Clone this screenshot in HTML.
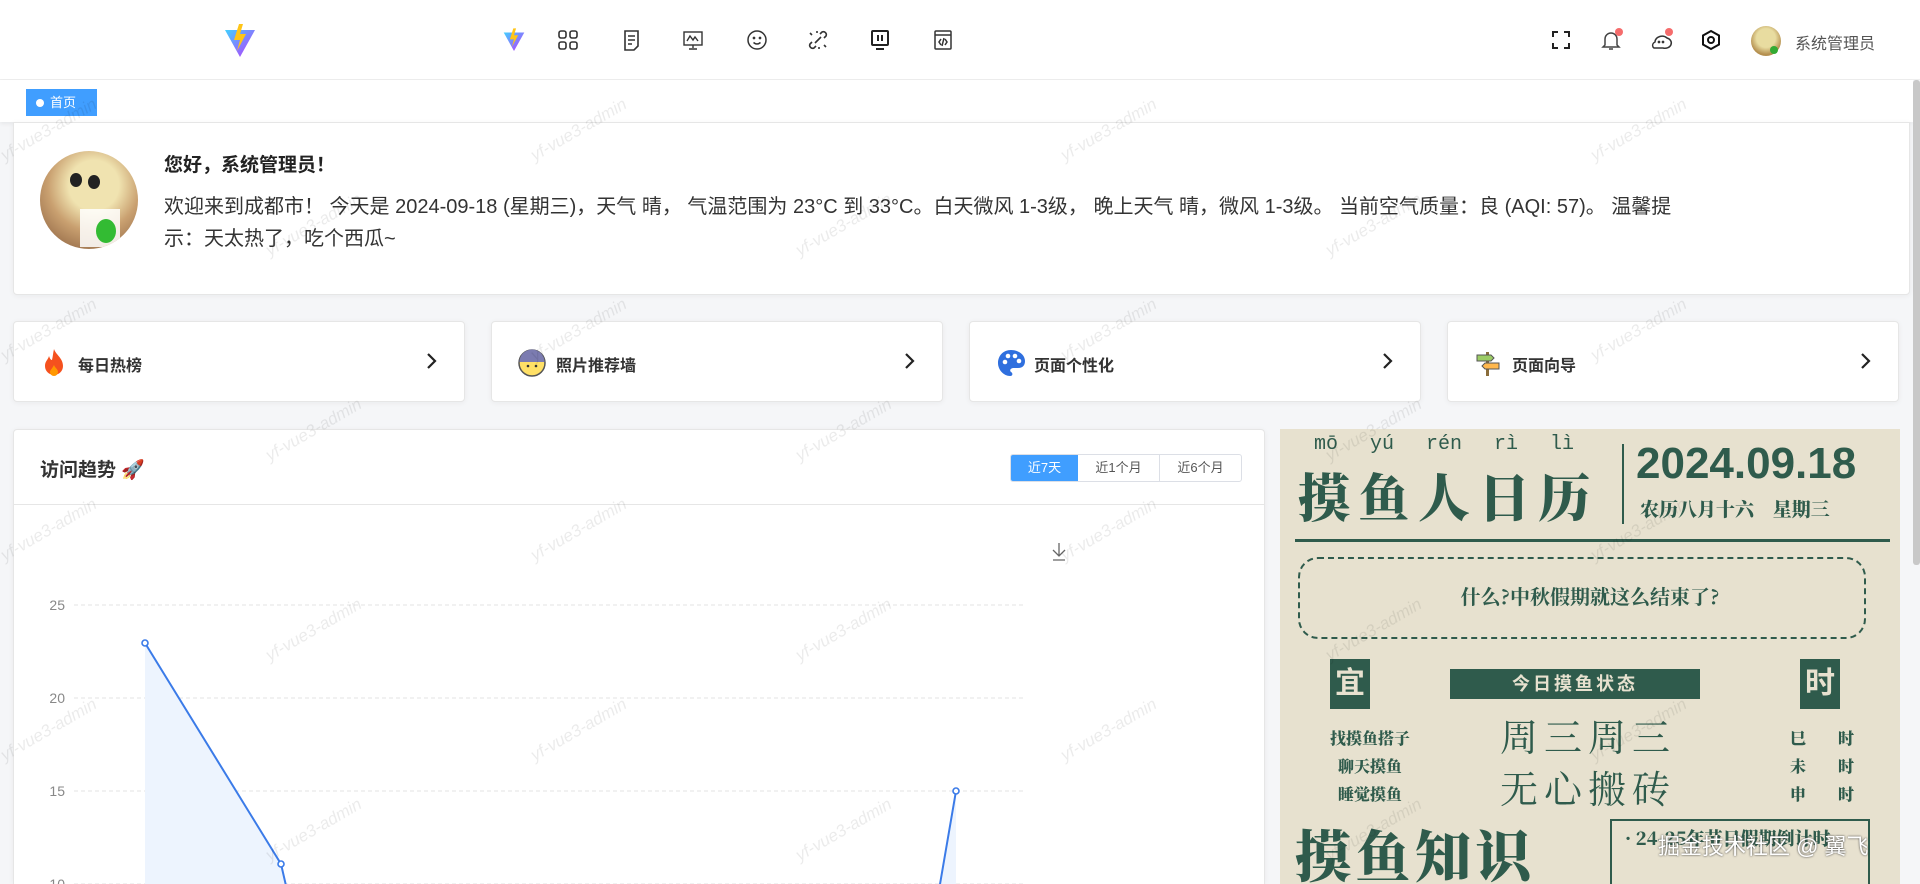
<!DOCTYPE html>
<html style="overflow:hidden;width:1920px;height:884px"><head><meta charset="utf-8">
<style>
*{box-sizing:border-box;margin:0;padding:0}
body{width:1920px;height:884px;overflow:hidden;background:#f5f6f8;font-family:"Liberation Sans","Noto Sans CJK SC",sans-serif;color:#333;position:relative}
.hdr{position:absolute;left:0;top:0;width:1920px;height:80px;background:#fff;border-bottom:1px solid #eee}
.tabs{position:absolute;left:0;top:80px;width:1913px;height:42px;background:#fff;box-shadow:0 2px 4px rgba(0,0,0,.06)}
.tag{position:absolute;left:26px;top:9px;width:71px;height:27px;background:#409eff;color:#fff;font-size:13px;line-height:27px;padding-left:10px}
.tag i{display:inline-block;width:8px;height:8px;border-radius:50%;background:#fff;margin-right:6px;vertical-align:0}
.card{position:absolute;background:#fff;border:1px solid #e6e6e6;border-radius:4px;box-shadow:0 1px 6px rgba(0,0,0,.05)}
.ic{position:absolute;top:28px;width:24px;height:24px}
.qc{top:321px;width:452px;height:81px}
.qc .t{position:absolute;left:64px;top:30px;font-size:16px;font-weight:bold;color:#333}
.qc .ar{position:absolute;right:26px;top:30px}
.wm{position:absolute;color:rgba(0,0,0,.08);font-size:17px;font-style:italic;transform:rotate(-30deg);white-space:nowrap;z-index:50;pointer-events:none}
.sb{position:absolute;right:0;top:80px;width:7px;height:485px;background:#c8c8c8;border-radius:3px}
.pg{color:#2f5b4c;font-family:"Noto Serif CJK SC","Noto Sans CJK SC",serif;font-weight:900;white-space:nowrap}
</style></head><body>
<div class="hdr">
 <svg style="position:absolute;left:224px;top:24px" width="32" height="34" viewBox="0 0 32 34"><defs><linearGradient id="v" x1="0" y1="0" x2="1" y2="1"><stop offset="0" stop-color="#41d1ff"/><stop offset="1" stop-color="#bd34fe"/></linearGradient></defs><path d="M1 6 L16 33 L31 6 Z" fill="url(#v)"/><path d="M15 0 L10 16 L16 16 L13 27 L22 10 L16 10 L19 0Z" fill="#ffc517"/></svg>
 <svg style="position:absolute;left:503px;top:28px" width="22" height="24" viewBox="0 0 32 34"><path d="M1 6 L16 33 L31 6 Z" fill="url(#v)"/><path d="M15 0 L10 16 L16 16 L13 27 L22 10 L16 10 L19 0Z" fill="#ffc517"/></svg>
 <svg class="ic" style="left:556px" viewBox="0 0 24 24" fill="none" stroke="#333" stroke-width="1.6"><rect x="3" y="3" width="7" height="7" rx="2"/><rect x="14" y="3" width="7" height="7" rx="2"/><rect x="3" y="14" width="7" height="7" rx="2"/><rect x="14" y="14" width="7" height="7" rx="2"/></svg>
 <svg class="ic" style="left:620px" viewBox="0 0 24 24" fill="none" stroke="#333" stroke-width="1.6"><path d="M5 3h13v15l-4 4H5z"/><path d="M8 8h7M8 12h7M8 16h4"/></svg>
 <svg class="ic" style="left:681px" viewBox="0 0 24 24" fill="none" stroke="#333" stroke-width="1.4"><rect x="3" y="4" width="18" height="13"/><path d="M6 13l3-5 3 4 2-3 3 4M12 17v3M8 21h8"/></svg>
 <svg class="ic" style="left:745px" viewBox="0 0 24 24" fill="none" stroke="#333" stroke-width="1.5"><circle cx="12" cy="12" r="9"/><circle cx="9" cy="10" r=".6"/><circle cx="15" cy="10" r=".6"/><path d="M8.5 14.5q3.5 3 7 0"/></svg>
 <svg class="ic" style="left:806px" viewBox="0 0 24 24" fill="none" stroke="#333" stroke-width="1.6"><path d="M14 6l2-2a3 3 0 014 4l-2 2M10 18l-2 2a3 3 0 01-4-4l2-2M9 15l6-6M4 5l2 2M18 17l2 2M11 3v2M13 19v2"/></svg>
 <svg class="ic" style="left:868px" viewBox="0 0 24 24" fill="none" stroke="#222" stroke-width="2"><rect x="4" y="3" width="16" height="14" rx="1"/><path d="M10 7v6M14 7v6M8 21h8"/></svg>
 <svg class="ic" style="left:931px" viewBox="0 0 24 24" fill="none" stroke="#333" stroke-width="1.5"><rect x="4" y="3" width="16" height="18" rx="1"/><path d="M4 7h16M10 11l-2 3 2 3M14 11l2 3-2 3M13 10l-2 8"/></svg>
 <svg class="ic" style="left:1549px" viewBox="0 0 24 24" fill="none" stroke="#222" stroke-width="2"><path d="M4 9V4h5M15 4h5v5M20 15v5h-5M9 20H4v-5"/></svg>
 <svg class="ic" style="left:1599px" viewBox="0 0 24 24" fill="none" stroke="#444" stroke-width="1.5"><path d="M6 17V11a6 6 0 0112 0v6l2 2H4z M10 21h4"/></svg>
 <div style="position:absolute;left:1615px;top:28px;width:8px;height:8px;border-radius:50%;background:#f56c6c"></div>
 <svg class="ic" style="left:1649px" viewBox="0 0 24 24" fill="none" stroke="#333" stroke-width="1.5"><path d="M4 19c-1-2 0-4 2-5a7 6 0 0112-4 6 5 0 01-4 10H5z"/><circle cx="10" cy="14" r=".6"/><circle cx="14" cy="14" r=".6"/></svg>
 <div style="position:absolute;left:1665px;top:28px;width:8px;height:8px;border-radius:50%;background:#f56c6c"></div>
 <svg class="ic" style="left:1699px" viewBox="0 0 24 24" fill="none" stroke="#111" stroke-width="2"><path d="M12 3l8 4.5v9L12 21l-8-4.5v-9z"/><circle cx="12" cy="12" r="3"/></svg>
 <div style="position:absolute;left:1751px;top:26px;width:30px;height:30px;border-radius:50%;background:radial-gradient(circle at 50% 40%,#e8dca0 40%,#b59050 70%)"><div style="position:absolute;right:3px;bottom:2px;width:8px;height:8px;border-radius:50%;background:#3a3"></div></div>
 <div style="position:absolute;left:1795px;top:30px;font-size:16px;color:#555">系统管理员</div>
</div>
<div class="tabs"><div class="tag"><i></i>首页</div></div>
<div class="sb"></div>

<div class="card" style="left:13px;top:122px;width:1897px;height:173px;border-radius:0 0 4px 4px">
 <div style="position:absolute;left:26px;top:28px;width:98px;height:98px;border-radius:50%;background:radial-gradient(circle at 55% 35%,#f0e3b0 30%,#c9a070 55%,#a07650 80%);overflow:hidden"><div style="position:absolute;left:30px;top:22px;width:12px;height:14px;background:#222;border-radius:50%"></div><div style="position:absolute;left:48px;top:24px;width:12px;height:14px;background:#222;border-radius:50%"></div><div style="position:absolute;left:40px;top:58px;width:40px;height:38px;background:#fff;opacity:.85"></div><div style="position:absolute;left:56px;top:68px;width:20px;height:24px;border-radius:50%;background:#3b3"></div></div>
 <div style="position:absolute;left:150px;top:27px;font-size:19px;font-weight:bold;color:#222">您好，系统管理员！</div>
 <div style="position:absolute;left:150px;top:68px;width:1525px;font-size:20px;line-height:32px;color:#333">欢迎来到成都市！ 今天是 2024-09-18 (星期三)，天气 晴， 气温范围为 23°C 到 33°C。白天微风 1-3级， 晚上天气 晴，微风 1-3级。 当前空气质量：良 (AQI: 57)。 温馨提示：天太热了，吃个西瓜~</div>
</div>

<div class="card qc" style="left:13px">
 <svg style="position:absolute;left:28px;top:26px" width="24" height="30" viewBox="0 0 24 30"><path d="M12 1c2 6 9 9 9 17a9 9 0 01-18 0c0-5 3-6 4-10 1 3 2 4 3 4 1-4 1-7 2-11z" fill="#f5511e"/><path d="M12 17c1 3 4 4 4 7a4 4 0 01-8 0c0-2 2-3 4-7z" fill="#ff9800"/></svg>
 <div class="t">每日热榜</div>
 <svg class="ar" width="14" height="18" viewBox="0 0 14 18" fill="none" stroke="#222" stroke-width="2.2"><path d="M4 2l7 7-7 7"/></svg>
</div>
<div class="card qc" style="left:491px">
 <svg style="position:absolute;left:26px;top:27px" width="28" height="28" viewBox="0 0 28 28"><circle cx="14" cy="14" r="13" fill="#ffe066" stroke="#555" stroke-width="1.5"/><path d="M1.5 13a12.5 12.5 0 0125 0z" fill="#7b7bb0"/><circle cx="10" cy="17" r="1.3" fill="#333"/><circle cx="18" cy="17" r="1.3" fill="#333"/></svg>
 <div class="t">照片推荐墙</div>
 <svg class="ar" width="14" height="18" viewBox="0 0 14 18" fill="none" stroke="#222" stroke-width="2.2"><path d="M4 2l7 7-7 7"/></svg>
</div>
<div class="card qc" style="left:969px">
 <svg style="position:absolute;left:26px;top:26px" width="30" height="30" viewBox="0 0 30 30"><path d="M15 2C7 2 2 8 2 15s6 13 12 13c3 0 3-3 1-4-2-2 0-4 3-4h4c5 0 7-3 7-7C29 7 23 2 15 2z" fill="#2f6fde"/><circle cx="9" cy="14" r="2.3" fill="#fff"/><circle cx="12" cy="8" r="2.3" fill="#fff"/><circle cx="19" cy="8" r="2.3" fill="#fff"/><circle cx="23" cy="13" r="2.3" fill="#fff"/></svg>
 <div class="t">页面个性化</div>
 <svg class="ar" width="14" height="18" viewBox="0 0 14 18" fill="none" stroke="#222" stroke-width="2.2"><path d="M4 2l7 7-7 7"/></svg>
</div>
<div class="card qc" style="left:1447px">
 <svg style="position:absolute;left:26px;top:27px" width="28" height="28" viewBox="0 0 28 28"><rect x="12" y="3" width="3" height="24" fill="#8a6d3b"/><path d="M3 6h14l3 3-3 3H3z" fill="#9ccc65" stroke="#555"/><path d="M25 14H11l-3 3 3 3h14z" fill="#ffb74d" stroke="#555"/></svg>
 <div class="t">页面向导</div>
 <svg class="ar" width="14" height="18" viewBox="0 0 14 18" fill="none" stroke="#222" stroke-width="2.2"><path d="M4 2l7 7-7 7"/></svg>
</div>

<div class="card" style="left:13px;top:429px;width:1252px;height:455px;border-radius:4px 4px 0 0;border-bottom:none;overflow:hidden">
 <div style="position:absolute;left:0;top:0;width:100%;height:75px;border-bottom:1px solid #e6e6e6"></div>
 <div style="position:absolute;left:26px;top:25px;font-size:19px;font-weight:bold;color:#333">访问趋势 🚀</div>
 <div style="position:absolute;left:996px;top:24px;height:28px;display:flex;font-size:13px;line-height:26px;border:1px solid #dcdfe6;border-radius:3px;overflow:hidden">
  <div style="width:67px;text-align:center;background:#409eff;color:#fff">近7天</div>
  <div style="width:82px;text-align:center;color:#555;border-right:1px solid #dcdfe6">近1个月</div>
  <div style="width:81px;text-align:center;color:#555">近6个月</div>
 </div>
 <svg style="position:absolute;left:0;top:0" width="1252" height="470">
  <path d="M1045 113v13M1039 120l6 6 6-6M1039 130h12" stroke="#666" stroke-width="1.3" fill="none"/>
  <g stroke="#e3e3e3" stroke-dasharray="4 3"><path d="M60 175H1010M60 268H1010M60 361H1010M60 454H1010"/></g>
  <g font-size="14" fill="#888" text-anchor="end" font-family="Liberation Sans"><text x="51" y="180">25</text><text x="51" y="273">20</text><text x="51" y="366">15</text><text x="51" y="459">10</text></g>
  <path d="M131 213L267 434L273 460L131 460Z" fill="#edf4fe"/>
  <path d="M925 460L942 361L942 460Z" fill="#edf4fe"/>
  <path d="M131 213L267 434L273 460M925 460L942 361" stroke="#3b7be8" stroke-width="2" fill="none"/>
  <circle cx="131" cy="213" r="3" fill="#fff" stroke="#3b7be8" stroke-width="1.6"/>
  <circle cx="267" cy="434" r="3" fill="#fff" stroke="#3b7be8" stroke-width="1.6"/>
  <circle cx="942" cy="361" r="3" fill="#fff" stroke="#3b7be8" stroke-width="1.6"/>
 </svg>
</div>

<div style="position:absolute;left:1280px;top:429px;width:620px;height:455px;background:#e7e1cf;overflow:hidden">
 <div class="pg" style="position:absolute;left:34px;top:4px;font-size:20px;font-weight:400;font-family:'Liberation Mono',monospace;word-spacing:20px">mō yú rén rì lì</div>
 <div class="pg" style="position:absolute;left:18px;top:28px;font-size:52px;letter-spacing:8px">摸鱼人日历</div>
 <div style="position:absolute;left:342px;top:15px;width:2px;height:80px;background:#2f5b4c"></div>
 <div class="pg" style="position:absolute;left:356px;top:10px;font-size:44px;font-family:'Liberation Sans';font-weight:bold">2024.09.18</div>
 <div class="pg" style="position:absolute;left:360px;top:66px;font-size:19px">农历八月十六 &nbsp;&nbsp; 星期三</div>
 <div style="position:absolute;left:15px;top:110px;width:595px;height:3px;background:#2f5b4c"></div>
 <div style="position:absolute;left:18px;top:128px;width:568px;height:82px;border:2px dashed #2f5b4c;border-radius:20px"></div>
 <div class="pg" style="position:absolute;left:0;top:152px;width:620px;text-align:center;font-size:20px;font-weight:700">什么?中秋假期就这么结束了?</div>
 <div style="position:absolute;left:50px;top:230px;width:40px;height:50px;background:#2f5b4c;color:#e7e1cf;font-size:30px;text-align:center;line-height:50px;font-weight:bold">宜</div>
 <div style="position:absolute;left:520px;top:230px;width:40px;height:50px;background:#2f5b4c;color:#e7e1cf;font-size:30px;text-align:center;line-height:50px;font-weight:bold">时</div>
 <div style="position:absolute;left:170px;top:240px;width:250px;height:30px;background:#2f5b4c;color:#e7e1cf;font-size:18px;text-align:center;line-height:30px;font-weight:bold;letter-spacing:3px">今日摸鱼状态</div>
 <div class="pg" style="position:absolute;left:30px;top:295px;font-size:16px;line-height:28px;text-align:center;width:120px">找摸鱼搭子<br>聊天摸鱼<br>睡觉摸鱼</div>
 <div class="pg" style="position:absolute;left:220px;top:280px;font-size:38px;font-weight:400;line-height:52px;letter-spacing:6px">周三周三<br>无心搬砖</div>
 <div class="pg" style="position:absolute;left:510px;top:295px;font-size:16px;line-height:28px;word-spacing:28px">巳 时<br>未 时<br>申 时</div>
 <div class="pg" style="position:absolute;left:15px;top:385px;font-size:56px;letter-spacing:4px">摸鱼知识</div>
 <div style="position:absolute;left:330px;top:390px;width:260px;height:80px;border:2px solid #2f5b4c"></div>
 <div class="pg" style="position:absolute;left:345px;top:396px;font-size:18px">· 24-25年节日假期倒计时</div>
 <div style="position:absolute;left:378px;top:400px;font-size:22px;color:#fff;text-shadow:0 0 2px #333">掘金技术社区 @ 翼飞</div>
</div>

<div class="wm" style="left:-5px;top:120px">yf-vue3-admin</div>
<div class="wm" style="left:525px;top:120px">yf-vue3-admin</div>
<div class="wm" style="left:1055px;top:120px">yf-vue3-admin</div>
<div class="wm" style="left:1585px;top:120px">yf-vue3-admin</div>
<div class="wm" style="left:260px;top:215px">yf-vue3-admin</div>
<div class="wm" style="left:790px;top:215px">yf-vue3-admin</div>
<div class="wm" style="left:1320px;top:215px">yf-vue3-admin</div>
<div class="wm" style="left:-5px;top:320px">yf-vue3-admin</div>
<div class="wm" style="left:525px;top:320px">yf-vue3-admin</div>
<div class="wm" style="left:1055px;top:320px">yf-vue3-admin</div>
<div class="wm" style="left:1585px;top:320px">yf-vue3-admin</div>
<div class="wm" style="left:260px;top:420px">yf-vue3-admin</div>
<div class="wm" style="left:790px;top:420px">yf-vue3-admin</div>
<div class="wm" style="left:1320px;top:420px">yf-vue3-admin</div>
<div class="wm" style="left:-5px;top:520px">yf-vue3-admin</div>
<div class="wm" style="left:525px;top:520px">yf-vue3-admin</div>
<div class="wm" style="left:1055px;top:520px">yf-vue3-admin</div>
<div class="wm" style="left:1585px;top:520px">yf-vue3-admin</div>
<div class="wm" style="left:260px;top:620px">yf-vue3-admin</div>
<div class="wm" style="left:790px;top:620px">yf-vue3-admin</div>
<div class="wm" style="left:1320px;top:620px">yf-vue3-admin</div>
<div class="wm" style="left:-5px;top:720px">yf-vue3-admin</div>
<div class="wm" style="left:525px;top:720px">yf-vue3-admin</div>
<div class="wm" style="left:1055px;top:720px">yf-vue3-admin</div>
<div class="wm" style="left:1585px;top:720px">yf-vue3-admin</div>
<div class="wm" style="left:260px;top:820px">yf-vue3-admin</div>
<div class="wm" style="left:790px;top:820px">yf-vue3-admin</div>
<div class="wm" style="left:1320px;top:820px">yf-vue3-admin</div>
</body></html>
